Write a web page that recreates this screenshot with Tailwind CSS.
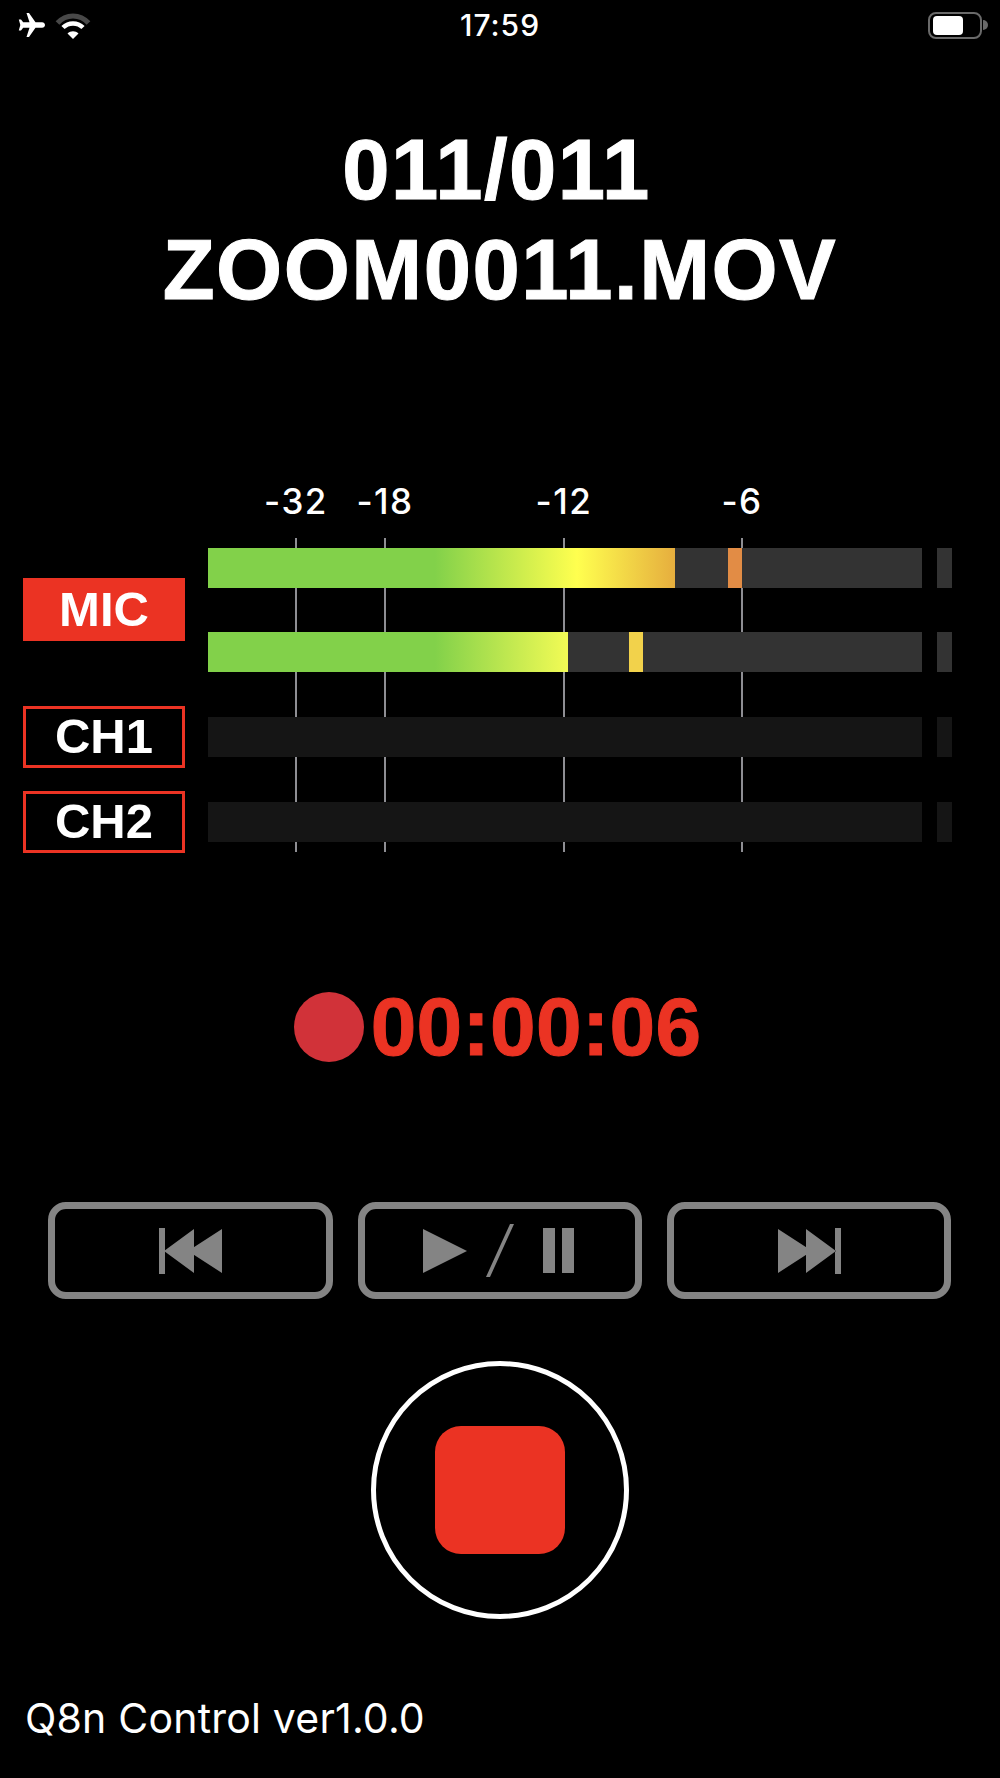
<!DOCTYPE html>
<html lang="en">
<head>
  <meta charset="UTF-8">
  <title>Q8n Control</title>
  <script src="https://cdn.jsdelivr.net/npm/@tailwindcss/browser@4"></script>
</head>
<body class="bg-black text-white font-['Liberation_Sans',sans-serif]">
  <div class="w-[1000px] h-[1778px] overflow-hidden flex flex-col">

    <!-- status bar -->
    <div class="h-[50px] shrink-0 grid grid-cols-[1fr_auto_1fr] items-center pl-[18px] pr-[12px]">
      <div class="flex items-center gap-[10px]">
        <svg class="w-[27px] h-[24px]" viewBox="0 0 27 24" fill="#fff"><path d="M8.500 0h2.500l6.500 9.300h6.500c1.700 0 3 1.200 3 2.700s-1.300 2.700-3 2.700h-6.500L11 24H8.500l3-9.300H5.200L3 17.500H.8L2.300 12 .8 6.500H3l2.200 2.800h6.300z"/></svg>
        <svg class="w-[36px] h-[27px]" viewBox="0 0 36 27" fill="none"><path d="M2.500 11C11 1.500 25 1.500 33.500 11" stroke="#484848" stroke-width="5"/><path d="M8 15.500C13.500 10 22.500 10 28 15.500" stroke="#fff" stroke-width="4.500"/><path d="M12.500 21.500C15.500 18.500 20.500 18.500 23.500 21.500L18 27z" fill="#fff"/></svg>
      </div>
      <span class="font-['Inter',sans-serif] font-medium text-[30px] tracking-[1px] mr-[6px]">17:59</span>
      <div class="flex items-center justify-end gap-[1px]">
        <div class="w-[54px] h-[27px] rounded-[8px] border-2 border-[#6a6a6a] py-[2px] px-[3px]"><div class="w-[30px] h-full rounded-[4px] bg-white"></div></div>
        <div class="w-[5px] h-[10px] rounded-r-full bg-[#6a6a6a]"></div>
      </div>
    </div>

    <!-- title -->
    <div class="mt-[70px] h-[200px] shrink-0 text-center font-bold text-[85px] tracking-[1.5px] leading-[100px] [-webkit-text-stroke:1px_white]">
      <div class="mr-[7px]">011/011</div>
      <div>ZOOM0011.MOV</div>
    </div>

    <!-- tick labels -->
    <div class="mt-[164px] h-[34px] shrink-0 relative font-['Inter',sans-serif] font-medium text-[35px] tracking-[1.5px] leading-[34px]">
      <span class="absolute left-[296px] -translate-x-1/2">-32</span>
      <span class="absolute left-[385px] -translate-x-1/2">-18</span>
      <span class="absolute left-[564px] -translate-x-1/2">-12</span>
      <span class="absolute left-[742px] -translate-x-1/2">-6</span>
    </div>

    <!-- meters -->
    <div class="relative mt-[20px] h-[314px] shrink-0 flex">
      <div class="absolute left-[295px] top-0 bottom-0 w-[2px] bg-[#8e8e93]"></div>
      <div class="absolute left-[384px] top-0 bottom-0 w-[2px] bg-[#8e8e93]"></div>
      <div class="absolute left-[563px] top-0 bottom-0 w-[2px] bg-[#8e8e93]"></div>
      <div class="absolute left-[741px] top-0 bottom-0 w-[2px] bg-[#8e8e93]"></div>

      <div class="relative w-[162px] ml-[23px] flex flex-col font-bold text-[49px]">
        <div class="mt-[40px] h-[63px] flex items-center justify-center bg-[#eb3323]">MIC</div>
        <div class="mt-[65px] h-[62px] flex items-center justify-center border-[3px] border-[#eb3323]">CH1</div>
        <div class="mt-[23px] h-[62px] flex items-center justify-center border-[3px] border-[#eb3323]">CH2</div>
      </div>

      <div class="relative ml-[23px] pt-[10px] flex flex-col">
        <div class="flex gap-[15px]">
          <div class="relative w-[714px] h-[40px] bg-[#333]">
            <div class="w-[467px] h-full bg-[linear-gradient(90deg,#82d14a_0px,#82d14a_227px,#ffff4f_369px,#e6ae3e_467px)]"></div>
            <div class="absolute left-[520px] top-0 w-[14px] h-full bg-[#e28c45]"></div>
          </div>
          <div class="w-[15px] h-[40px] bg-[#333]"></div>
        </div>
        <div class="mt-[44px] flex gap-[15px]">
          <div class="relative w-[714px] h-[40px] bg-[#333]">
            <div class="w-[360px] h-full bg-[linear-gradient(90deg,#82d14a_0px,#82d14a_227px,#f2fb55_360px)]"></div>
            <div class="absolute left-[421px] top-0 w-[14px] h-full bg-[#f2d24b]"></div>
          </div>
          <div class="w-[15px] h-[40px] bg-[#333]"></div>
        </div>
        <div class="mt-[45px] flex gap-[15px]">
          <div class="w-[714px] h-[40px] bg-[#151515]"></div>
          <div class="w-[15px] h-[40px] bg-[#151515]"></div>
        </div>
        <div class="mt-[45px] flex gap-[15px]">
          <div class="w-[714px] h-[40px] bg-[#151515]"></div>
          <div class="w-[15px] h-[40px] bg-[#151515]"></div>
        </div>
      </div>
    </div>

    <!-- timer -->
    <div class="mt-[140px] h-[70px] shrink-0 flex items-center justify-center gap-[7px] pr-[5px]">
      <div class="w-[70px] h-[70px] rounded-full bg-[#d13239]"></div>
      <span class="font-bold text-[82px] tracking-[0.3px] leading-[70px] text-[#eb3323] [-webkit-text-stroke:1px_#eb3323]">00:00:06</span>
    </div>

    <!-- transport -->
    <div class="mt-[140px] shrink-0 px-[48px] flex gap-[25px]">
      <button class="w-[285px] h-[97px] rounded-[18px] border-[7px] border-[#848484] flex items-center justify-center">
        <svg class="w-[63px] h-[46px]" viewBox="0 0 63 46" fill="#848484"><path d="M0 0h6v46H0zM5 23 35 1v44zM29 23 63 1v44z"/></svg>
      </button>
      <button class="w-[284px] h-[97px] rounded-[18px] border-[7px] border-[#848484] flex items-center justify-center">
        <svg class="w-[152px] h-[54px] mr-[2px]" viewBox="0 0 152 54" fill="#848484"><path d="M0 5v44l44-22zM63 53h4L91 0h-4zM120 4h12v45h-12zM139 4h12v45h-12z"/></svg>
      </button>
      <button class="w-[284px] h-[97px] rounded-[18px] border-[7px] border-[#848484] flex items-center justify-center">
        <svg class="w-[63px] h-[46px]" viewBox="0 0 63 46" fill="#848484"><path d="M0 1v44l34-22zM28 1v44l30-22zM57 0h6v46h-6z"/></svg>
      </button>
    </div>

    <!-- stop button -->
    <div class="mt-[62px] shrink-0 flex justify-center">
      <button class="w-[258px] h-[258px] rounded-full border-[5px] border-white flex items-center justify-center">
        <span class="w-[130px] h-[128px] rounded-[26px] bg-[#eb3323]"></span>
      </button>
    </div>

    <div class="mt-[74px] shrink-0 pl-[25px] font-['Inter',sans-serif] text-[41px] tracking-[0.2px] leading-[50px]">Q8n Control ver1.0.0</div>
  </div>
</body>
</html>
